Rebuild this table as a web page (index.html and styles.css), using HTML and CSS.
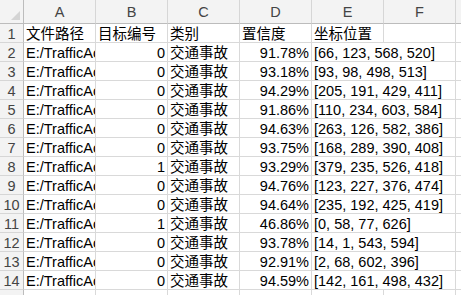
FILE: index.html
```html
<!DOCTYPE html>
<html>
<head>
<meta charset="utf-8">
<link rel="stylesheet" href="styles.css">
</head>
<body>
<div class="sheet">
  <div class="corner"><span class="tri"></span></div>
  <div class="ch">A</div><div class="ch">B</div><div class="ch">C</div><div class="ch">D</div><div class="ch">E</div><div class="ch">F</div><div class="ch">G</div>

  <div class="rh">1</div><div class="c">文件路径</div><div class="c">目标编号</div><div class="c">类别</div><div class="c">置信度</div><div class="c">坐标位置</div><div class="c"></div><div class="c"></div>

  <div class="rh">2</div><div class="c">E:/TrafficAccident/1.jpg</div><div class="c r">0</div><div class="c">交通事故</div><div class="c r">91.78%</div><div class="c ov">[66, 123, 568, 520]</div><div class="c"></div><div class="c"></div>
  <div class="rh">3</div><div class="c">E:/TrafficAccident/2.jpg</div><div class="c r">0</div><div class="c">交通事故</div><div class="c r">93.18%</div><div class="c ov">[93, 98, 498, 513]</div><div class="c"></div><div class="c"></div>
  <div class="rh">4</div><div class="c">E:/TrafficAccident/3.jpg</div><div class="c r">0</div><div class="c">交通事故</div><div class="c r">94.29%</div><div class="c ov">[205, 191, 429, 411]</div><div class="c"></div><div class="c"></div>
  <div class="rh">5</div><div class="c">E:/TrafficAccident/4.jpg</div><div class="c r">0</div><div class="c">交通事故</div><div class="c r">91.86%</div><div class="c ov">[110, 234, 603, 584]</div><div class="c"></div><div class="c"></div>
  <div class="rh">6</div><div class="c">E:/TrafficAccident/5.jpg</div><div class="c r">0</div><div class="c">交通事故</div><div class="c r">94.63%</div><div class="c ov">[263, 126, 582, 386]</div><div class="c"></div><div class="c"></div>
  <div class="rh">7</div><div class="c">E:/TrafficAccident/6.jpg</div><div class="c r">0</div><div class="c">交通事故</div><div class="c r">93.75%</div><div class="c ov">[168, 289, 390, 408]</div><div class="c"></div><div class="c"></div>
  <div class="rh">8</div><div class="c">E:/TrafficAccident/7.jpg</div><div class="c r">1</div><div class="c">交通事故</div><div class="c r">93.29%</div><div class="c ov">[379, 235, 526, 418]</div><div class="c"></div><div class="c"></div>
  <div class="rh">9</div><div class="c">E:/TrafficAccident/8.jpg</div><div class="c r">0</div><div class="c">交通事故</div><div class="c r">94.76%</div><div class="c ov">[123, 227, 376, 474]</div><div class="c"></div><div class="c"></div>
  <div class="rh">10</div><div class="c">E:/TrafficAccident/9.jpg</div><div class="c r">0</div><div class="c">交通事故</div><div class="c r">94.64%</div><div class="c ov">[235, 192, 425, 419]</div><div class="c"></div><div class="c"></div>
  <div class="rh">11</div><div class="c">E:/TrafficAccident/10.jpg</div><div class="c r">1</div><div class="c">交通事故</div><div class="c r">46.86%</div><div class="c ov">[0, 58, 77, 626]</div><div class="c"></div><div class="c"></div>
  <div class="rh">12</div><div class="c">E:/TrafficAccident/11.jpg</div><div class="c r">0</div><div class="c">交通事故</div><div class="c r">93.78%</div><div class="c ov">[14, 1, 543, 594]</div><div class="c"></div><div class="c"></div>
  <div class="rh">13</div><div class="c">E:/TrafficAccident/12.jpg</div><div class="c r">0</div><div class="c">交通事故</div><div class="c r">92.91%</div><div class="c ov">[2, 68, 602, 396]</div><div class="c"></div><div class="c"></div>
  <div class="rh">14</div><div class="c">E:/TrafficAccident/13.jpg</div><div class="c r">0</div><div class="c">交通事故</div><div class="c r">94.59%</div><div class="c ov">[142, 161, 498, 432]</div><div class="c"></div><div class="c"></div>
  <div class="rh">15</div><div class="c"></div><div class="c"></div><div class="c"></div><div class="c"></div><div class="c"></div><div class="c"></div><div class="c"></div>
</div>
</body>
</html>
```
FILE: styles.css
```css
html, body {
  margin: 0;
  padding: 0;
  background: #ffffff;
  overflow: hidden;
}
.sheet {
  display: grid;
  grid-template-columns: 24px repeat(7, 72px);
  grid-template-rows: 24px repeat(15, 19px);
  font-family: "Liberation Sans", "Noto Sans CJK SC", sans-serif;
  font-size: 14.5px;
  color: #000;
}
.sheet > div {
  box-sizing: border-box;
  border-right: 1px solid #d9d9d9;
  border-bottom: 1px solid #d9d9d9;
  white-space: nowrap;
}
.corner {
  background: #f3f3f3;
  position: relative;
}
.sheet > .corner {
  border-right: 1px solid #bcbcbc;
  border-bottom: 1px solid #bcbcbc;
}
.tri {
  position: absolute;
  right: 3px;
  bottom: 3px;
  width: 0;
  height: 0;
  border-left: 9px solid transparent;
  border-bottom: 9px solid #d4d4d4;
}
.sheet > .ch {
  background: #f3f3f3;
  color: #444;
  text-align: center;
  line-height: 24px;
  border-right: 1px solid #d6d6d6;
  border-bottom: 1px solid #bcbcbc;
}
.sheet > .rh {
  background: #f3f3f3;
  color: #444;
  text-align: center;
  line-height: 20px;
  border-right: 1px solid #bcbcbc;
  border-bottom: 1px solid #d6d6d6;
}
.c {
  overflow: hidden;
  line-height: 20px;
  padding: 0 2px;
}
.r {
  text-align: right;
}
.sheet > .ov {
  overflow: visible;
  border-right: none;
}
```
